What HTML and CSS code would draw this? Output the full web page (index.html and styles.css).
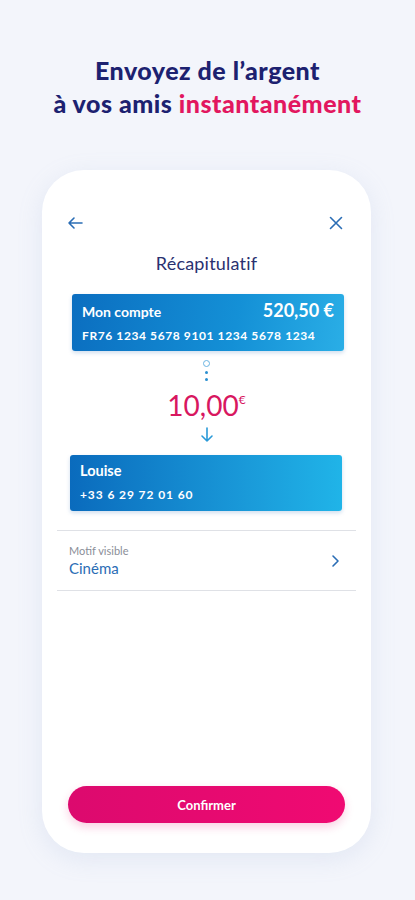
FILE: index.html
```html
<!DOCTYPE html>
<html lang="fr">
<head>
    <meta charset="utf-8">
    <meta name="viewport" content="width=device-width, initial-scale=1.0">
    <title>Récapitulatif</title>
    <link rel="stylesheet" href="styles.css">
</head>
<body>
    <h1 class="titre">
        Envoyez de l’argent<br>
        à vos amis <span class="rose">instantanément</span>
    </h1>

    <div class="phone">
        <div class="topbar">
            <svg class="icone" width="18" height="18" viewBox="0 0 18 18">
                <path d="M16 9H3M8 4L3 9l5 5" fill="none" stroke="#2a6db5" stroke-width="1.6" stroke-linecap="round" stroke-linejoin="round"/>
            </svg>
            <svg class="icone" width="18" height="18" viewBox="0 0 18 18">
                <path d="M3.5 3.5l11 11M14.5 3.5l-11 11" fill="none" stroke="#2a6db5" stroke-width="1.6" stroke-linecap="round"/>
            </svg>
        </div>

        <div class="soustitre">Récapitulatif</div>

        <div class="carte carte-compte">
            <div class="ligne">
                <span class="nom">Mon compte</span>
                <span class="solde">520,50 €</span>
            </div>
            <div class="detail">FR76 1234 5678 9101 1234 5678 1234</div>
        </div>

        <div class="montant-bloc">
            <div class="points">
                <span class="rond"></span>
                <span class="point"></span>
                <span class="point"></span>
            </div>
            <div class="montant">10,00<sup>€</sup></div>
            <svg width="14" height="16" viewBox="0 0 14 16">
                <path d="M7 1v13M2 9l5 5 5-5" fill="none" stroke="#2a9ad8" stroke-width="1.6" stroke-linecap="round" stroke-linejoin="round"/>
            </svg>
        </div>

        <div class="carte carte-dest">
            <div class="nom">Louise</div>
            <div class="detail">+33 6 29 72 01 60</div>
        </div>

        <div class="motif">
            <div>
                <div class="motif-label">Motif visible</div>
                <div class="motif-valeur">Cinéma</div>
            </div>
            <svg width="10" height="14" viewBox="0 0 10 14">
                <path d="M3 2l5 5-5 5" fill="none" stroke="#2a6db5" stroke-width="1.6" stroke-linecap="round" stroke-linejoin="round"/>
            </svg>
        </div>

        <div class="espace"></div>

        <div class="bouton">Confirmer</div>
    </div>
</body>
</html>
```

FILE: styles.css
```css
* {
    box-sizing: border-box;
    margin: 0;
    padding: 0;
}

body {
    background: #f3f5fb;
    font-family: "Lato", "Liberation Sans", sans-serif;
    width: 415px;
    height: 900px;
    overflow: hidden;
}

.titre {
    text-align: center;
    color: #1c2170;
    font-size: 25px;
    font-weight: 900;
    line-height: 33px;
    letter-spacing: 0.5px;
    padding-top: 54px;
}

.rose {
    color: #e2175f;
}

.phone {
    width: 329px;
    height: 683px;
    margin: 50px 0 0 42px;
    background: #fff;
    border-radius: 42px;
    box-shadow: 0 6px 24px rgba(150, 170, 210, 0.18);
    display: flex;
    flex-direction: column;
    padding: 44px 15px 30px 15px;
}

.topbar {
    display: flex;
    justify-content: space-between;
    padding: 0 11px 0 9px;
}

.icone {
    display: block;
}

.soustitre {
    text-align: center;
    color: #2a3170;
    font-size: 18px;
    margin-top: 20px;
    letter-spacing: 0.2px;
}

.carte {
    color: #fff;
    border-radius: 3px;
    box-shadow: 0 2px 4px rgba(20, 90, 170, 0.2);
}

.carte-compte {
    margin: 20px 12px 0 15px;
    height: 57px;
    padding: 5px 10px 0 10px;
    background: linear-gradient(100deg, #0b6ec0 0%, #1490d6 60%, #2aaee6 100%);
}

.carte-dest {
    margin: 0 14px 0 13px;
    height: 56px;
    padding: 7px 10px 0 10px;
    background: linear-gradient(90deg, #0a6bbd 0%, #1a9ad9 65%, #20b4e8 100%);
}

.ligne {
    display: flex;
    justify-content: space-between;
    align-items: baseline;
}

.nom {
    font-size: 14px;
    font-weight: 700;
}

.carte-dest .nom {
    font-size: 14.5px;
}

.solde {
    font-size: 18px;
    font-weight: 700;
}

.detail {
    font-size: 12px;
    font-weight: 700;
    margin-top: 7px;
    letter-spacing: 0.6px;
    white-space: nowrap;
}

.carte-dest .detail {
    margin-top: 8px;
    letter-spacing: 0.9px;
}

.montant-bloc {
    display: flex;
    flex-direction: column;
    align-items: center;
    padding: 9px 0 12px 0;
}

.points {
    display: flex;
    flex-direction: column;
    align-items: center;
    gap: 4px;
}

.rond {
    width: 7px;
    height: 7px;
    border: 1px solid #6ab4e2;
    border-radius: 50%;
}

.point {
    width: 3px;
    height: 3px;
    background: #2a8fd0;
    border-radius: 50%;
}

.montant {
    color: #d8175f;
    font-size: 28px;
    line-height: 34px;
    margin: 2px 0 5px 0;
}

.montant sup {
    font-size: 12px;
    vertical-align: 12px;
}

.motif {
    margin: 19px 0 0 0;
    height: 61px;
    border-top: 1px solid #dfe1e6;
    border-bottom: 1px solid #dfe1e6;
    display: flex;
    justify-content: space-between;
    align-items: center;
    padding: 0 16px 0 12px;
}

.motif-label {
    font-size: 11px;
    color: #8a8e98;
}

.motif-valeur {
    font-size: 15px;
    color: #2a6db5;
    margin-top: 2px;
}

.espace {
    flex: 1;
}

.bouton {
    margin: 0 11px 0 11px;
    height: 37px;
    border-radius: 19px;
    background: linear-gradient(90deg, #dc0a6e 0%, #f00a72 100%);
    box-shadow: 0 4px 10px rgba(230, 20, 110, 0.2);
    color: #fff;
    font-size: 13px;
    font-weight: 700;
    display: flex;
    align-items: center;
    justify-content: center;
}
```
